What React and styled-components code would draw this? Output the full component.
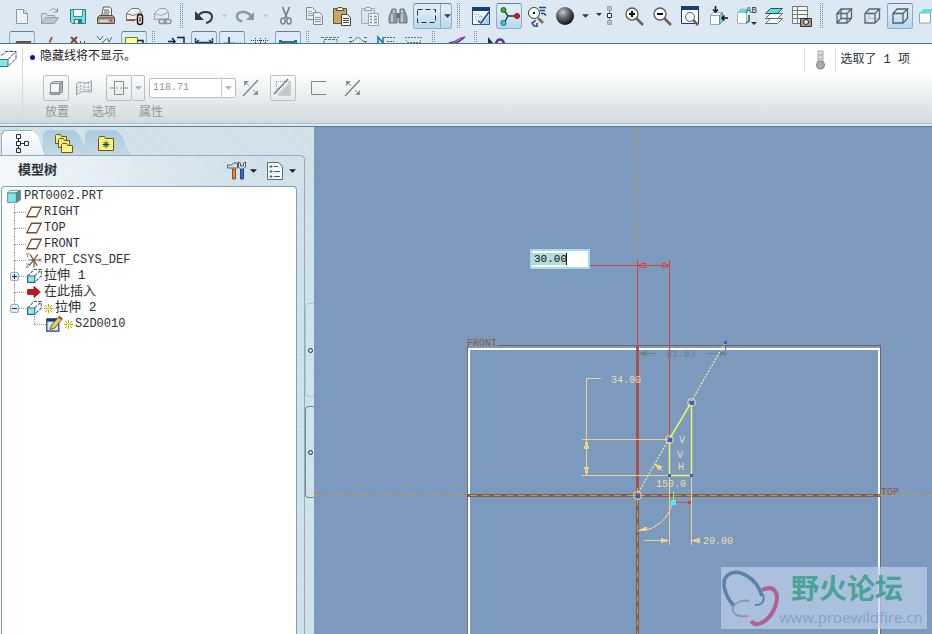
import React from "react";
import styled, { createGlobalStyle, css } from "styled-components";

const GlobalStyle = createGlobalStyle`
  * {
    box-sizing: border-box;
  }
  body {
    margin: 0;
    overflow: hidden;
    color: #2b3036;
    font: 12px/16px "Liberation Mono", "Noto Sans CJK SC", monospace;
  }
  button, input, select {
    margin: 0;
    padding: 0;
    border: 0;
    background: none;
    color: inherit;
    font: inherit;
  }
`;

const Page = styled.div`
  display: flex;
  flex-direction: column;
  height: 100vh;
`;

/* toolbars */

const Toolbars = styled.header`
  flex: none;
  background: #dce9f2;
  border-bottom: 1px solid #41798f;
`;

const Toolbar = styled.div`
  display: flex;
  height: ${({ $clipped }) => ($clipped ? "12px" : "31px")};
  padding: ${({ $clipped }) => ($clipped ? "0 0 0 8px" : "3px 0 0 8px")};
  overflow: hidden;
`;

const pressed = css`
  border: 1px solid #8eadc4;
  border-top-color: #65808f;
  background: linear-gradient(#dcebf5 30%, #b9d8ee);
`;

const ToolButton = styled.button`
  display: flex;
  flex: none;
  align-items: center;
  justify-content: center;
  width: 26px;
  height: 26px;
  margin: 0 1px;
  border-radius: 3px;
  ${({ $active }) => $active && pressed}
`;

const ArrowButton = styled.button`
  display: flex;
  flex: none;
  align-items: center;
  justify-content: center;
  width: 13px;
  height: 26px;
`;

const SplitButton = styled.div`
  display: flex;
  flex: none;
  width: 39px;
  height: 26px;
  margin: 0 1px;
  border-radius: 3px;
  ${pressed}
  button {
    margin: 0;
    height: 24px;
  }
  button + button {
    border-left: 1px solid #8eadc4;
  }
`;

const Grip = styled.span`
  flex: none;
  width: 14px;
  height: 26px;
  background-image: repeating-linear-gradient(#7594a9 0 1px, transparent 1px 2px),
    repeating-linear-gradient(#7594a9 0 1px, transparent 1px 2px);
  background-repeat: no-repeat;
  background-size: 1px 26px;
  background-position: 4px 0, 6px 0;
`;

const Svg = styled.svg`
  display: block;
  flex: none;
  overflow: visible;
`;

const Icon = ({ size = 20, children }) => (
  <Svg width={size} height={size} viewBox="0 0 20 20" fill="none" aria-hidden="true">
    {children}
  </Svg>
);

const Caret = ({ color = "#2d3e4b", width = 7 }) => (
  <Svg width={width} height="4" viewBox="0 0 8 4" aria-hidden="true">
    <path d="M0 0h8L4 4z" fill={color} />
  </Svg>
);

const cubeLines = "M3 7.500h10v9.500H3zM3 7.500l4-4.500h10.500l-4.500 4.500M17.500 3v9.500l-4.500 4.500";

const icons = {
  new: <path d="M4.500 3.500h7l4 4v10h-11zM11.500 3.500v4h4" fill="#eef3f6" stroke="#8d989f" />,
  open: (
    <>
      <path d="M1.500 17.500v-10h5l1 2h7v3" fill="#d3dade" stroke="#98a2a8" />
      <path d="M1.500 17.500l4-6h13l-4 6z" fill="#b9c3c9" stroke="#98a2a8" />
      <path d="M10 5c2-3 5-3 7 0M17.500 2v4h-4" stroke="#8d989f" />
    </>
  ),
  save: (
    <>
      <path d="M2.500 3.500h15v14h-13l-2-2z" fill="#74e6e4" stroke="#2f747c" />
      <path d="M5.500 3.500h9v7h-9z" fill="#f2fbfb" stroke="#4b8e94" />
      <path d="M6 13h8v4.500H6z" fill="#3e767d" />
      <path d="M7 14h3v3.500H7z" fill="#d9f4f3" />
    </>
  ),
  print: (
    <>
      <path d="M5.500 10l2-9h6l2 2v7z" fill="#fff" stroke="#555" />
      <path d="M8 4h5M8 6h6M7 8h6" stroke="#555" />
      <path d="M1.500 11.500l2-2h13l2 2v6h-17z" fill="#b6a893" stroke="#544c42" />
      <path d="M2 12h16" stroke="#544c42" />
      <path d="M4 15h8" stroke="#fff" />
      <path d="M14 14.500h2" stroke="#c33" strokeWidth="2" />
    </>
  ),
  mail: (
    <>
      <path d="M2.500 13.500v-6l5-5h7l3 4v7z" fill="#f1f1ee" stroke="#777" />
      <path d="M2 7.500l7 2 8-3" stroke="#777" />
      <path d="M2 14.500h9" stroke="#a33" />
      <rect x="13.500" y="8.500" width="5" height="10" rx="2.500" fill="#fff" stroke="#111" strokeWidth="1.500" />
      <path d="M16 11v5" stroke="#c22" strokeWidth="1.500" />
    </>
  ),
  link: (
    <>
      <path d="M2.500 13.500v-6l5-5h6l3 4v6z" fill="#e4eaee" stroke="#99a3a9" />
      <path d="M2 7.500l7 2 7-3" stroke="#99a3a9" />
      <rect x="7" y="13.500" width="7" height="4" rx="2" stroke="#8c969c" strokeWidth="1.500" />
      <rect x="12" y="13.500" width="7" height="4" rx="2" stroke="#8c969c" strokeWidth="1.500" />
    </>
  ),
  undo: (
    <>
      <path d="M4 10c4-6 14-5 14 1 0 3-2 5-6 6" stroke="#303a44" strokeWidth="2" />
      <path d="M1 5v9h9z" fill="#303a44" />
    </>
  ),
  redo: (
    <>
      <path d="M16 10C12 4 2 5 2 10.500c0 3 2 4 5 5" stroke="#8b989f" strokeWidth="2.500" />
      <path d="M19 6v8h-8z" fill="#8b989f" />
    </>
  ),
  cut: (
    <>
      <path d="M6.500 1l4.500 11M13.500 1L9 12" stroke="#76828b" strokeWidth="1.700" />
      <ellipse cx="7" cy="15" rx="2.200" ry="3" stroke="#76828b" strokeWidth="1.400" />
      <ellipse cx="13" cy="15" rx="2.200" ry="3" stroke="#76828b" strokeWidth="1.400" />
    </>
  ),
  copy: (
    <>
      <path d="M2.500 1.500h6l3 3v9h-9z" fill="#e8eef2" stroke="#7d8a93" />
      <path d="M4 5.500h4M4 7.500h6M4 9.500h5" stroke="#9ba6ad" />
      <path d="M9.500 6.500h6l3 3v9h-9z" fill="#e8eef2" stroke="#7d8a93" />
      <path d="M11 11.500h6M11 13.500h6M11 15.500h6" stroke="#8a969e" />
    </>
  ),
  paste: (
    <>
      <path d="M1.500 2.500h13v15h-13z" fill="#c7a761" stroke="#6e5426" />
      <path d="M4 4.500h8l-2-3H6z" fill="#eee" stroke="#555" />
      <path d="M9.500 8.500h6l3 3v8h-9z" fill="#fff" stroke="#444" />
      <path d="M11 12.500h6M11 14.500h6M11 16.500h6" stroke="#444" />
    </>
  ),
  pasteSpecial: (
    <>
      <path d="M1.500 2.500h13v15h-13z" fill="#dbe3e8" stroke="#a4aeb5" />
      <path d="M4 4.500h8l-2-3H6z" fill="#eee" stroke="#95a0a7" />
      <path d="M8.500 7.500h10v12h-10z" fill="#f1f6f9" stroke="#9aa5ac" />
      <path d="M10 10.500h2M10 13.500h2M10 16.500h2M14 10.500h3M14 13.500h3M14 16.500h3" stroke="#6a91ad" strokeWidth="1.500" />
    </>
  ),
  find: (
    <>
      <path d="M4 3h4v4l1 2v8H1v-6zM12 3h4l3 8v6h-8V9l1-2z" fill="#8c979e" stroke="#6d7a82" />
      <path d="M8 7h4v5H8z" fill="#66737b" />
      <path d="M4 8v8M14 8v8M6 4v3M14 4v3" stroke="#ced7dc" strokeWidth="1.500" />
    </>
  ),
  select: <rect x=".5" y="3.500" width="18" height="13" stroke="#25313b" strokeDasharray="5 3" />,
  sketch: (
    <>
      <path d="M1.500 1.500h17v17h-17z" fill="#f2faff" stroke="#28549a" />
      <path d="M1 1h18v4H1z" fill="#123c83" />
      <path d="M3 8c6 0 9 3 10 8M4 11h8M5 14h6" stroke="#61a4b8" strokeDasharray="1 1" />
      <path d="M18 6l-8 11-3-2" stroke="#153d6c" strokeWidth="1.500" />
      <path d="M11 18l7-9v9z" fill="#a5cee6" />
    </>
  ),
  constraints: (
    <>
      <path d="M5 4l4 6-4 7M9 10h8" stroke="#203847" strokeWidth="1.400" />
      <circle cx="4.500" cy="4" r="2.500" fill="#2bbd32" stroke="#126119" />
      <circle cx="4.500" cy="17" r="2.500" fill="#35cfd5" stroke="#116d78" />
      <circle cx="18" cy="10" r="2.500" fill="#d92125" stroke="#7b1012" />
    </>
  ),
  inspect: (
    <>
      <circle cx="7" cy="7" r="5.500" fill="#fff" stroke="#333a44" />
      <path d="M11 12l5 5" stroke="#8c6846" strokeWidth="2.500" />
      <path d="M6 6h2v2H6z" fill="#111" />
      <path d="M12 1.500h7M13 4.500h5M14 7.500h3l2 2M8 14v1l-3 2 2 3h3M10 17v4" stroke="#27488d" strokeWidth="1.500" />
    </>
  ),
  sphere: (
    <>
      <defs>
        <radialGradient id="ball" cx=".38" cy=".3" r=".7">
          <stop stopColor="#c9cdd0" />
          <stop offset=".4" stopColor="#6f7478" />
          <stop offset="1" stopColor="#121416" />
        </radialGradient>
      </defs>
      <circle cx="10" cy="10" r="9" fill="url(#ball)" />
    </>
  ),
  tree: (
    <>
      <path d="M0 7h6L3 10z" fill="#26343e" />
      <path d="M13.500 3v14" stroke="#7b8d98" />
      <path d="M11.500.500h4v4h-4zM11.500 14.500h4v4h-4z" fill="#b5bfc5" stroke="#99a7b0" />
      <path d="M11.500 7.500h4v4h-4z" fill="#fff" stroke="#1e2d37" />
    </>
  ),
  zoomIn: (
    <>
      <path d="M12 12l7 7" stroke="#795e4c" strokeWidth="2.500" />
      <circle cx="8" cy="8" r="6" fill="#fbfdfd" stroke="#555b60" strokeWidth="1.300" />
      <path d="M5 8h6M8 5v6" stroke="#111" strokeWidth="2" />
    </>
  ),
  zoomOut: (
    <>
      <path d="M12 12l7 7" stroke="#795e4c" strokeWidth="2.500" />
      <circle cx="8" cy="8" r="6" fill="#fbfdfd" stroke="#555b60" strokeWidth="1.300" />
      <path d="M5 8h6" stroke="#111" strokeWidth="2" />
    </>
  ),
  refit: (
    <>
      <path d="M1.500 1.500h17v16h-17z" fill="#fff" stroke="#173c77" />
      <path d="M1 0h18v4H1z" fill="#173c77" />
      <path d="M13 14l5 5" stroke="#795e4c" strokeWidth="2.500" />
      <circle cx="10" cy="11" r="4.500" fill="#eef6f8" stroke="#555b60" />
    </>
  ),
  reorient: (
    <>
      <path d="M2.500 9.500h9v9h-9zM2.500 9.500l3-3h9l-3 3" fill="#f5ffff" stroke="#91a9b0" />
      <path d="M11.500 9.500l3-3v9l-3 3z" fill="#80cfd5" stroke="#5c8f96" />
      <path d="M7.500 0v6M5 3.500L7.500 6 10 3.500M20 12h-6M16.500 9.500L14 12l2.500 2.500" stroke="#111" strokeWidth="1.500" />
    </>
  ),
  views: (
    <>
      <path d="M1.500 6.500h9v11h-9z" fill="#fff" stroke="#a5b5bc" />
      <path d="M1.500 6.500l3-4h7l-1 4z" fill="#67dcdf" />
      <path d="M13 9v6l-3 2" stroke="#4e8087" strokeWidth="2" />
      <text x="10" y="7" fontSize="9" fill="#222" fontFamily="Liberation Mono, monospace">AB</text>
      <path d="M15 16h6l-3 3z" fill="#26343e" />
    </>
  ),
  layers: (
    <>
      <path d="M1.500 17.500l5-5h12l-5 5z" fill="#fff" stroke="#536b75" />
      <path d="M1.500 12.500l5-5h12l-5 5z" fill="#fff" stroke="#536b75" />
      <path d="M1.500 7.500l5-5h12l-5 5z" fill="#61dadd" stroke="#28535f" />
    </>
  ),
  snapshot: (
    <>
      <path d="M.5.500h15v17H.5zM5.500 1v16M1 4.500h14M1 8.500h14M1 12.500h14" fill="#f4f4f1" stroke="#73797b" />
      <path d="M8.500 12.500h11v8h-11z" fill="#a49c88" stroke="#333" />
      <circle cx="14" cy="16" r="2.500" fill="#eee" stroke="#222" />
    </>
  ),
  wire: <path d={cubeLines + "M7 3v9.500h10.500M7 12.500L3 17"} stroke="#566675" strokeWidth="1.300" />,
  hidden: (
    <>
      <path d="M7 3v9.500h10.500M7 12.500L3 17" stroke="#b1bcc4" />
      <path d={cubeLines} stroke="#566675" strokeWidth="1.300" />
    </>
  ),
  noHidden: <path d={cubeLines} stroke="#4b6278" strokeWidth="1.300" />,
  shaded: (
    <>
      <path d="M1.500 7h11v10h-11z" fill="#fff" stroke="#8fa4ad" />
      <path d="M1.500 7l4-4h12l-5 4z" fill="#63dcdf" />
    </>
  ),
};

/* only the upper edge of the second toolbar is visible */
const sketchIcons = {
  plane: <path d="M3 13l2-5h13l-2 5z" stroke="#7c4a2c" strokeWidth="2" />,
  axis: <path d="M12 3L7 14" stroke="#a6612f" strokeWidth="2" strokeDasharray="6 2" />,
  point: <path d="M3 3l6 6m0-6l-6 6M12 8h1m3 0h1" stroke="#88462d" strokeWidth="2" />,
  csys: <path d="M1 2l3 4 3-4M6 9l4-4M11 4l2 4 3-5" stroke="#58616a" />,
  note: (
    <>
      <path d="M1.500 3.500h12v9h-12z" fill="#ffff93" stroke="#78763b" />
      <path d="M13 6.500h6V15" stroke="#222" strokeWidth="1.500" />
    </>
  ),
  ref: <path d="M2 7.500h7M6 4l3 3.500L6 11M11 3.500h7V12" stroke="#111c52" strokeWidth="1.500" />,
  dim: <path d="M1.500 4v9M18.500 4v9M2 8.500h16M5 6L2 8.500 5 11M15 6l3 2.500-3 2.500" stroke="#203b59" strokeWidth="1.300" />,
  perp: <path d="M7 3v7M2 9.500h11M15 9.500h1m2 0h1" stroke="#122165" strokeWidth="1.500" />,
  grid: <path d="M1 6.500h18M5.500 4v6M10.500 4v6M15.500 4v6" stroke="#253176" strokeDasharray="1 1" />,
  vertex: (
    <>
      <path d="M3 8h14" stroke="#173866" strokeWidth="1.500" />
      <path d="M1 6h3v4H1zM16 6h3v4h-3z" fill="#087aa1" />
    </>
  ),
  slot: <path d="M1 3.500h18M4 5.500h13v4h-4v3H8v-3H4z" stroke="#547f78" strokeDasharray="3 1" />,
  angle: <path d="M1 10l9-7 9 7M1 3.500h3M16 3.500h3M1 7.500h3M16 7.500h3" stroke="#58646b" strokeDasharray="3 1" />,
  normal: (
    <>
      <path d="M2 9V3l5 6V3" stroke="#1976a8" strokeWidth="1.500" />
      <path d="M8 3.500h11M11 7.500h7" stroke="#58646b" strokeDasharray="2 1" />
    </>
  ),
  dash: <path d="M1 3.500h18M3 8.500h14M2 6.500h1M16 6.500h1" stroke="#567e7c" strokeDasharray="2 1" />,
  curve: (
    <>
      <path d="M1 10l6-2h5l7-5" stroke="#273360" strokeWidth="1.500" />
      <path d="M6 9l9-5 4-1" stroke="#b14bc0" strokeWidth="1.500" />
    </>
  ),
  arc: (
    <>
      <path d="M0 3v6h5z" fill="#26313a" />
      <path d="M8 10c1-6 7-6 8 0" stroke="#682c80" strokeWidth="2.500" />
    </>
  ),
};

const Tool = ({ name, active, label }) => (
  <ToolButton $active={active} aria-label={label || name}>
    <Icon>{icons[name] || sketchIcons[name]}</Icon>
  </ToolButton>
);

/* message area and feature dashboard */

const Dashboard = styled.section`
  display: flex;
  flex: none;
  height: 79px;
  padding-top: 3px;
  background: linear-gradient(#fff 35%, #d2dadd);
`;

const FeatureMark = styled.div`
  flex: none;
  width: 23px;
  height: 72px;
  padding-top: 2px;
  border-right: 1px solid #d2d9dd;
`;

const Controls = styled.div`
  flex: 1;
  padding-left: 7px;
`;

const Message = styled.p`
  display: flex;
  align-items: center;
  gap: 5px;
  margin: 0 0 8px;
  height: 20px;
  color: #222;
`;

const Bullet = styled.span`
  width: 5px;
  height: 5px;
  border-radius: 50%;
  background: #1212b4;
`;

const ControlRow = styled.div`
  display: flex;
  align-items: center;
  height: 26px;
  padding-left: 13px;
  gap: 4px;
`;

const FlatButton = styled.button`
  display: flex;
  align-items: center;
  justify-content: center;
  width: ${({ $narrow }) => ($narrow ? "22px" : "26px")};
  height: 26px;
  border: 1px solid ${({ $boxed }) => ($boxed ? "#b9c0c4" : "transparent")};
  border-radius: 2px;
`;

const FlatSplit = styled.div`
  display: flex;
  margin: 0 0 0 7px;
  width: 39px;
  button + button {
    width: 13px;
    border-left: 0;
  }
`;

const Combo = styled.div`
  position: relative;
  width: 87px;
  height: 20px;
  select {
    width: 100%;
    height: 20px;
    padding: 0 18px 0 3px;
    border: 1px solid #bbc2c6;
    border-radius: 2px;
    background: #fff;
    color: #8f9498;
    font-size: 10px;
    appearance: none;
    opacity: 1;
  }
`;

const ComboArrow = styled.span`
  position: absolute;
  top: 1px;
  right: 1px;
  display: flex;
  align-items: center;
  justify-content: center;
  width: 14px;
  height: 18px;
  border-left: 1px solid #c5cbcf;
  pointer-events: none;
`;

const ButtonGroup = styled.div`
  display: flex;
  gap: ${({ $wide }) => ($wide ? "12px" : "8px")};
  padding-left: ${({ $wide }) => ($wide ? "8px" : "0")};
`;

const SlideUps = styled.nav`
  display: flex;
  gap: 23px;
  padding: 4px 0 0 15px;
  color: #92989c;
`;

const Status = styled.div`
  display: flex;
  align-items: center;
  height: 26px;
  padding-right: 22px;
`;

const Thermo = styled.span`
  display: flex;
  justify-content: center;
  width: 32px;
  height: 24px;
  margin-right: 4px;
  padding-top: 2px;
  border: solid #d5dadd;
  border-width: 0 1px;
`;

const Divider = styled.div`
  flex: none;
  height: 4px;
  background: #dfebf1;
  border-top: 1px solid #b3c1c7;
  border-bottom: 1px solid #547f98;
`;

/* navigator */

const Main = styled.main`
  display: flex;
  flex: 1;
  min-height: 0;
`;

const Navigator = styled.aside`
  display: flex;
  flex: none;
  width: 314px;
  background: repeating-linear-gradient(45deg, #cbdde7 0 1px, #d5e4ec 1px 3px);
`;

const PanelColumn = styled.div`
  display: flex;
  flex: 1;
  flex-direction: column;
`;

const Tabs = styled.div`
  display: flex;
  height: 28px;
  padding: 3px 0 0 1px;
`;

const Tab = styled.button`
  position: relative;
  z-index: ${({ $active }) => ($active ? 2 : 0)};
  display: flex;
  align-items: center;
  justify-content: center;
  width: 42px;
  height: 25px;
  &::before,
  &::after {
    content: "";
    position: absolute;
    z-index: -1;
    inset: 0 -3px 0 0;
    background: ${({ $active }) => ($active ? "#a0b4bf" : "#b2cfe0")};
    clip-path: polygon(0 4px, 3px 0, 31px 0, 36px 5px, 100% 100%, 0 100%);
  }
  &::after {
    inset: 1px -2px 0 1px;
    background: ${({ $active }) =>
      $active ? "linear-gradient(#fff, #eaf1f5)" : "linear-gradient(#aaccdf, #c4d9e5)"};
  }
`;

const Panel = styled.section`
  display: flex;
  flex: 1;
  flex-direction: column;
  padding-right: 7px;
  border-top: 1px solid #93abb7;
  border-right: 1px solid #93abb7;
  border-radius: 0 5px 0 0;
  background: linear-gradient(90deg, #f3f7fa, transparent 75%);
`;

const PanelHeader = styled.div`
  display: flex;
  align-items: center;
  height: 30px;
  padding: 0 1px 0 18px;
  h2 {
    flex: 1;
    margin: 0;
    font-size: 13px;
    font-weight: 700;
  }
`;

const HeaderButton = styled.button`
  display: flex;
  align-items: center;
  justify-content: flex-end;
  gap: 4px;
  width: 39px;
`;

const Tree = styled.ul`
  flex: 1;
  margin: 0 0 0 1px;
  padding: 1px 0 0;
  border: 1px solid #7fa0b1;
  border-bottom: 0;
  border-radius: 4px 4px 0 0;
  background: #fff;
  list-style: none;
`;

const Node = styled.li`
  display: flex;
  align-items: center;
  gap: 2px;
  height: 16px;
  padding-left: ${({ $root }) => ($root ? "4px" : "0")};
  font-size: ${({ $cjk }) => ($cjk ? "13px" : "12px")};
  white-space: pre;
`;

const Guide = styled.span`
  position: relative;
  width: ${({ $child }) => ($child ? "42px" : "22px")};
  height: 16px;
  &::before,
  &::after {
    content: "";
    position: absolute;
    left: ${({ $child }) => ($child ? "32px" : "12px")};
  }
  &::before {
    top: 0;
    height: ${({ $last }) => ($last ? "8px" : "16px")};
    border-left: 1px dotted #a69b94;
  }
  &::after {
    top: 8px;
    width: 12px;
    border-top: 1px dotted #a69b94;
  }
`;

const Expander = styled.button`
  position: absolute;
  z-index: 1;
  top: 4px;
  left: 8px;
  display: flex;
  align-items: center;
  justify-content: center;
  width: 9px;
  height: 9px;
  border: 1px solid #98aebf;
  border-radius: 2px;
  background: #dce9f2;
`;

const treeIcons = {
  part: (
    <>
      <path d="M2 6h11v12H2z" fill="#80e7e8" stroke="#4b7e88" />
      <path d="M2 6l3-3h13l-5 3z" fill="#e5ffff" stroke="#4b7e88" />
      <path d="M13 6l5-3v12l-5 3z" fill="#548f98" stroke="#4b7e88" />
    </>
  ),
  plane: <path d="M1 16L7 4h12l-6 12z" fill="#fff" stroke="#7b4d30" strokeWidth="1.700" />,
  csys: (
    <>
      <path d="M5 3l9 14M15 3L4 17M3 10h16M10 10v9" stroke="#79533a" strokeWidth="1.500" />
      <path d="M0 1l2 3 2-3M2 4v3M16 8l3 4m0-4l-3 4M0 15h4l-4 4h4" stroke="#68707a" />
    </>
  ),
  extrude: (
    <>
      <path d="M2 10h9v8H2z" fill="#8eeaf0" stroke="#316b7d" strokeWidth="1.400" />
      <path d="M2 10L10 2h9v8l-8 8M11 10l8-8" stroke="#455a67" strokeWidth="1.300" strokeDasharray="4 1.500" />
    </>
  ),
  insert: <path d="M2 7h8V3l8 7-8 7v-4H2z" fill="#c5161c" stroke="#7d1215" />,
  sketch: (
    <>
      <path d="M1 4h15v15H1z" fill="#d5ecfb" stroke="#183d78" strokeWidth="1.500" />
      <path d="M1 3h15v4H1z" fill="#183d78" />
      <path d="M5 17l2-6L16 1l4 3-9 11z" fill="#e8cb51" stroke="#4c3e20" />
      <path d="M15 2l2-2 4 3-2 2z" fill="#b03b30" />
    </>
  ),
};

const Star = () => (
  <Svg width="9" height="9" viewBox="0 0 9 9" aria-hidden="true">
    <path d="M4.500 0v9M0 4.500h9M1 1l7 7M8 1L1 8" stroke="#b9a51e" />
    <path d="M3 3h3v3H3z" fill="#f5e930" />
  </Svg>
);

const nodes = [
  { icon: "part", text: "PRT0002.PRT", root: true },
  { icon: "plane", text: "RIGHT" },
  { icon: "plane", text: "TOP" },
  { icon: "plane", text: "FRONT" },
  { icon: "csys", text: "PRT_CSYS_DEF" },
  { icon: "extrude", text: "拉伸 1", cjk: true, toggle: "closed" },
  { icon: "insert", text: "在此插入", cjk: true },
  { icon: "extrude", text: "拉伸 2", cjk: true, toggle: "open", star: true, last: true },
  { icon: "sketch", text: "S2D0010", child: true, star: true, last: true },
];

const SashColumn = styled.div`
  display: flex;
  flex: none;
  flex-direction: column;
  gap: 9px;
  width: 9px;
  padding-top: 176px;
`;

const Sash = styled.button`
  display: flex;
  align-items: center;
  justify-content: center;
  height: ${({ $raised }) => ($raised ? "92px" : "94px")};
  border: 1px solid ${({ $raised }) => ($raised ? "#6f8a98" : "#a9c8da")};
  border-right: 0;
  border-radius: 4px 0 0 4px;
  &::before {
    content: "";
    width: 3px;
    height: 3px;
    border: 1px solid #24323b;
    border-radius: 50%;
  }
`;

/* sketch canvas */

const Canvas = styled.section`
  position: relative;
  flex: 1;
  overflow: hidden;
  background: #7b9abe;
`;

const Drawing = styled.svg`
  position: absolute;
  inset: 0;
  width: 100%;
  height: 100%;
  fill: none;
  shape-rendering: crispEdges;
  text {
    font: 10px "Liberation Mono", monospace;
    stroke: none;
  }
`;

const DimensionInput = styled.input`
  position: absolute;
  top: 122px;
  left: 216px;
  width: 60px;
  height: 20px;
  padding-left: 2px;
  border: 2px solid #a8dbe9;
  background: #fff linear-gradient(90deg, #b5dcdb 34px, #1a1a1a 34px 35px, #fff 35px) 0 2px /
    100% 12px no-repeat;
  color: #111;
  font-size: 11px;
`;

const Watermark = styled.div`
  position: absolute;
  right: 5px;
  bottom: 5px;
  display: flex;
  width: 206px;
  height: 62px;
  background: rgba(192, 208, 232, 0.7);
`;

const Brand = styled.div`
  color: #83a0c8;
  font: 15px/20px "Open Sans", sans-serif;
  white-space: nowrap;
  strong {
    display: block;
    padding-left: 12px;
    color: #4aa398;
    font: 700 28px/40px "Noto Sans CJK SC", sans-serif;
  }
`;

const Handle = ({ x, y }) => (
  <>
    <circle cx={x + 0.5} cy={y + 0.5} r="4" stroke="#efd9a0" shapeRendering="auto" />
    <path d={`M${x - 1} ${y - 1}h4v4h-4z`} fill="#3a5fc4" />
  </>
);

const SketchDrawing = () => (
  <Drawing role="img" aria-label="S2D0010">
    {/* datum planes */}
    <path d="M183 218.500h384M153.500 507V219M566.500 507V219" stroke="#855f50" />
    <path d="M155 508V222h410V508" stroke="#fff" strokeWidth="2" />
    <path d="M153 368.500h414M323.500 219v289" stroke="#80604d" strokeWidth="3" />
    <path d="M0 368.500h618M323.500 0v508" stroke="#d59436" strokeDasharray="7 5" />
    <text x="153" y="219" fill="#8a5b45">FRONT</text>
    <text x="567" y="368" fill="#8a5b45">TOP</text>

    {/* dimension being edited */}
    <g stroke="#dd3f3c">
      <path d="M276 138.500h80M323.500 133v86M355.500 133v178" />
      <path d="M323.500 219v149" stroke="#a9524c" strokeWidth="3" />
      <path d="M324 138.500l4-2h3v4h-3zM355 138.500l-4-2h-3v4h3z" />
    </g>

    {/* reference dimension */}
    <g stroke="#6e7f8c">
      <path d="M326 226.500h16M393 226.500h18M411.500 219v11" />
      <path d="M326 226.500l6-2v4zM411 226.500l-6-2v4z" fill="#6e7f8c" />
      <text x="352" y="230" fill="#6e7f8c">81.63</text>
    </g>

    {/* weak and strong dimensions */}
    <g stroke="#ecd08b">
      <path d="M287 251.500h-14.500v97M268 312.500h87M267 348.500h88" />
      <path d="M272.500 313l-2 8h4zM272.500 348l-2-8h4z" fill="#ecd08b" />
      <path d="M355.500 349v69M377.500 349v69M330 413.500h25M378 413.500h8" />
      <path d="M355 413.500l-8-2v4zM378 413.500l7-2v4z" fill="#ecd08b" />
      <path d="M323.500 404A35 35 0 0 0 358 376M341 337l8 7" />
      <path d="M341 337l7 3-3 3zM324 404l8-4 1 3z" fill="#ecd08b" />
    </g>
    <g fill="#f1dcaa">
      <text x="297" y="256">34.00</text>
      <text x="389" y="417">20.00</text>
      <text x="342" y="360">150.0</text>
      <text x="365" y="316">V</text>
      <text x="363" y="331">V</text>
      <text x="364" y="343">H</text>
    </g>

    {/* sketched section */}
    <g shapeRendering="auto">
      <path d="M411 216l-34 59M355 312l-32 56" stroke="#edf08a" strokeWidth="1.300" strokeDasharray="2 1.500" />
      <path d="M377.500 275L355.500 312v36.500h22z" stroke="#f3f35c" strokeWidth="1.500" />
    </g>
    <Handle x={377} y={275} />
    <Handle x={355} y={312} />
    <path d="M316 368.500h15M323.500 361v15" stroke="#f0a43d" />
    <Handle x={323} y={368} />
    <path d="M410 214h3v3h-3zM354 347h3v3h-3zM376 347h3v3h-3z" fill="#3a5fc4" />

    {/* origin triad */}
    <path d="M359.500 364v10" stroke="#a4ec64" />
    <path d="M361 375.500h14" stroke="#cc4c61" />
    <circle cx="359.500" cy="375.500" r="3" fill="#5ae8e7" />
    <circle cx="375.500" cy="375.500" r="2" fill="#dc3b46" />
  </Drawing>
);

const Flip = () => (
  <Icon>
    <path d="M2 18L17 2" stroke="#777e83" strokeWidth="1.300" />
    <path d="M3 3h5L3 8zM17 17h-5l5-5z" fill="#8b9296" />
    <path d="M4 4l4 4M12 12l4 4" stroke="#8b9296" />
  </Icon>
);

export default function App() {
  return (
    <Page>
      <GlobalStyle />
      <Toolbars>
        <Toolbar>
          <Tool name="new" />
          <Tool name="open" />
          <Tool name="save" />
          <Tool name="print" />
          <Tool name="mail" />
          <Tool name="link" />
          <Grip />
          <Tool name="undo" />
          <ArrowButton aria-label="undo list"><Caret color="#b5c1ca" width={5} /></ArrowButton>
          <Tool name="redo" />
          <ArrowButton aria-label="redo list"><Caret color="#b5c1ca" width={5} /></ArrowButton>
          <Tool name="cut" />
          <Tool name="copy" />
          <Tool name="paste" />
          <Tool name="pasteSpecial" />
          <Tool name="find" />
          <SplitButton>
            <Tool name="select" />
            <ArrowButton aria-label="select mode"><Caret /></ArrowButton>
          </SplitButton>
          <Grip />
          <Tool name="sketch" />
          <Tool name="constraints" active />
          <Tool name="inspect" />
          <Tool name="sphere" />
          <ArrowButton aria-label="appearance list"><Caret /></ArrowButton>
          <Tool name="tree" />
          <Tool name="zoomIn" />
          <Tool name="zoomOut" />
          <Tool name="refit" />
          <Tool name="reorient" />
          <Tool name="views" />
          <Tool name="layers" />
          <Tool name="snapshot" />
          <Grip />
          <Tool name="wire" />
          <Tool name="hidden" />
          <Tool name="noHidden" active />
          <Tool name="shaded" />
        </Toolbar>
        <Toolbar $clipped>
          <Tool name="plane" active />
          <Tool name="axis" />
          <Tool name="point" />
          <Tool name="csys" />
          <Tool name="note" active />
          <Grip />
          <Tool name="ref" />
          <Tool name="dim" active />
          <Tool name="perp" active />
          <Tool name="grid" />
          <Tool name="vertex" active />
          <Grip />
          <Tool name="slot" />
          <Tool name="angle" />
          <Tool name="normal" />
          <Tool name="dash" />
          <Grip />
          <Tool name="curve" />
          <Grip />
          <Tool name="arc" />
        </Toolbar>
      </Toolbars>

      <Dashboard>
        <FeatureMark>
          <Svg width="17" height="20" viewBox="0 0 17 20" fill="none" aria-hidden="true">
            <path d="M-3 10.500H8v7H-3z" fill="#83e6ec" stroke="#40717e" />
            <path d="M-3 10L6 2.500h10v7l-8 8M8 10.500l8-8" stroke="#3c5563" strokeDasharray="4 1" />
          </Svg>
        </FeatureMark>
        <Controls>
          <Message>
            <Bullet />
            隐藏线将不显示。
          </Message>
          <ControlRow>
            <FlatButton $boxed aria-label="solid">
              <Icon>
                <path d="M4.500 5.500h9v9h-9z" fill="#f3f5f6" stroke="#888f94" />
                <path d="M13.500 5.500l3-2v10l-3 3h-9l-1-2h10z" fill="#a6adb1" stroke="#888f94" />
                <path d="M4.500 5.500l3-2h9l-3 2z" fill="#d5dadc" stroke="#888f94" />
              </Icon>
            </FlatButton>
            <FlatButton $narrow aria-label="surface">
              <Icon>
                <path d="M2.500 6C6 1 10 8 17.500 3v11c-6 0-10-2-15 3z" fill="#eceeef" stroke="#999fa3" />
                <path d="M3 10c5-4 9 2 14-2M3 13c5-4 9 1 14-2M6.500 4v10M10.500 5v9M14.500 5v9" stroke="#b4babd" strokeDasharray="2 1" />
              </Icon>
            </FlatButton>
            <FlatSplit>
              <FlatButton $boxed aria-label="depth">
                <Icon>
                  <path d="M5.500 3.500h9v13h-9zM1 10h4M7 10h2M11 10h2M15 10h4" stroke="#858c90" />
                </Icon>
              </FlatButton>
              <FlatButton $boxed aria-label="depth list"><Caret color="#aab0b4" /></FlatButton>
            </FlatSplit>
            <Combo>
              <select aria-label="depth value" disabled>
                <option>118.71</option>
              </select>
              <ComboArrow><Caret color="#aab0b4" /></ComboArrow>
            </Combo>
            <ButtonGroup>
              <FlatButton $narrow aria-label="flip depth"><Flip /></FlatButton>
              <FlatButton $boxed aria-label="remove material">
                <Icon>
                  <path d="M4 16L16 4v12z" fill="#d2d6d8" />
                  <path d="M3 3.500h14M3.500 4v8" stroke="#92999d" strokeDasharray="1 1" />
                  <path d="M17 3v14H5M8 16l8-8M11 16l5-5M14 16l2-2" stroke="#a0a6a9" />
                  <path d="M1 16L15 1" stroke="#6f767a" strokeWidth="1.300" />
                </Icon>
              </FlatButton>
            </ButtonGroup>
            <ButtonGroup $wide>
              <FlatButton $narrow aria-label="thicken">
                <Icon><path d="M17 3.500H2.500v13H17" stroke="#7f868a" /></Icon>
              </FlatButton>
              <FlatButton $narrow aria-label="flip side"><Flip /></FlatButton>
            </ButtonGroup>
          </ControlRow>
          <SlideUps>
            <button>放置</button>
            <button>选项</button>
            <button>属性</button>
          </SlideUps>
        </Controls>
        <Status>
          <Thermo>
            <Svg width="10" height="20" viewBox="0 0 10 20" aria-hidden="true">
              <path d="M3 1h5v12H3z" fill="#d9dddf" stroke="#a8adaf" />
              <path d="M3 5h5M3 9h5" stroke="#a8adaf" />
              <circle cx="5.500" cy="15" r="4" fill="#aaaeb0" stroke="#7d8285" />
            </Svg>
          </Thermo>
          选取了 1 项
        </Status>
      </Dashboard>
      <Divider />

      <Main>
        <Navigator>
          <PanelColumn>
            <Tabs>
              <Tab $active aria-label="model tree">
                <Icon>
                  <path d="M4.500 1.500h4v4h-4zM4.500 8.500h4v4h-4zM4.500 15.500h4v4h-4zM12.500 8.500h4v4h-4zM6.500 6v2M6.500 13v2M9 10.500h3" stroke="#222b33" />
                </Icon>
              </Tab>
              <Tab aria-label="folders">
                <Icon>
                  <path d="M1.500 2.500l1-1h4l1 2h5v7h-11z" fill="#f8ea75" stroke="#675a1e" />
                  <path d="M4.500 6.500l1-1h4l1 2h5v7h-11z" fill="#f8ea75" stroke="#675a1e" />
                  <path d="M7.500 11.500l1-1h4l1 2h5v7h-11z" fill="#fff58a" stroke="#675a1e" />
                </Icon>
              </Tab>
              <Tab aria-label="favorites">
                <Icon>
                  <path d="M2.500 5.500l1-2h5l1 2h8v12h-15z" fill="#fff36b" stroke="#62591d" />
                  <path d="M10 8v7M6.500 11.500h7M7.500 9l5 5M12.500 9l-5 5" stroke="#17397d" />
                </Icon>
              </Tab>
            </Tabs>
            <Panel>
              <PanelHeader>
                <h2>模型树</h2>
                <HeaderButton aria-label="settings">
                  <Icon>
                    <path d="M6.500 8h3v10h-3z" fill="#e08b42" stroke="#8d4b22" />
                    <path d="M1.500 7V4h4l2-2h4v5h-5z" fill="#d9dee0" stroke="#545c61" />
                    <path d="M14.500 8h3v10h-3z" fill="#3d6ecb" stroke="#274682" />
                    <path d="M12.500 1v5l2 2h3l2-2V1l-2 1v3h-3V2z" fill="#d9dee0" stroke="#545c61" />
                  </Icon>
                  <Caret color="#111c24" />
                </HeaderButton>
                <HeaderButton aria-label="show">
                  <Icon>
                    <path d="M2.500 1.500h11l4 4v13h-15z" fill="#f4f8fa" stroke="#566d7c" />
                    <path d="M9 5.500h4M9 10.500h6M9 15.500h6" stroke="#46545d" />
                    <path d="M5 5h2v1H5zM5 10h2v1H5zM5 15h2v1H5z" stroke="#46545d" />
                  </Icon>
                  <Caret color="#111c24" />
                </HeaderButton>
              </PanelHeader>
              <Tree>
                {nodes.map((n) => (
                  <Node key={n.text} $root={n.root} $cjk={n.cjk}>
                    {!n.root && (
                      <Guide $child={n.child} $last={n.last}>
                        {n.toggle && (
                          <Expander aria-label={n.text}>
                            <Svg width="5" height="5" viewBox="0 0 5 5" aria-hidden="true">
                              <path
                                d={n.toggle === "closed" ? "M0 2.500h5M2.500 0v5" : "M0 2.500h5"}
                                stroke="#1d3346"
                              />
                            </Svg>
                          </Expander>
                        )}
                      </Guide>
                    )}
                    <Icon size={16}>{treeIcons[n.icon]}</Icon>
                    {n.star && <Star />}
                    {n.text}
                  </Node>
                ))}
              </Tree>
            </Panel>
          </PanelColumn>
          <SashColumn>
            <Sash aria-label="collapse" />
            <Sash $raised aria-label="resize" />
          </SashColumn>
        </Navigator>

        <Canvas>
          <SketchDrawing />
          <DimensionInput aria-label="dimension" defaultValue="30.00" />
          <Watermark>
            <Svg width="58" height="62" viewBox="0 0 58 62" fill="none" aria-hidden="true">
              <path d="M13 39C4 29-1 14 7 8c9-7 28 1 34 21" stroke="#5c80ad" strokeWidth="3.500" />
              <path d="M41 23c13-6 18 4 13 17-5 13-18 22-24 14" stroke="#b2608f" strokeWidth="4" />
              <path d="M28 34c-9-2-18 4-16 10 2 5 9 6 15 5" stroke="#8497ba" strokeWidth="2" />
              <path d="M42 27c2 8-1 11-8 11" stroke="#5c80ad" strokeWidth="2" />
            </Svg>
            <Brand>
              <strong>野火论坛</strong>
              www.proewildfire.cn
            </Brand>
          </Watermark>
        </Canvas>
      </Main>
    </Page>
  );
}
